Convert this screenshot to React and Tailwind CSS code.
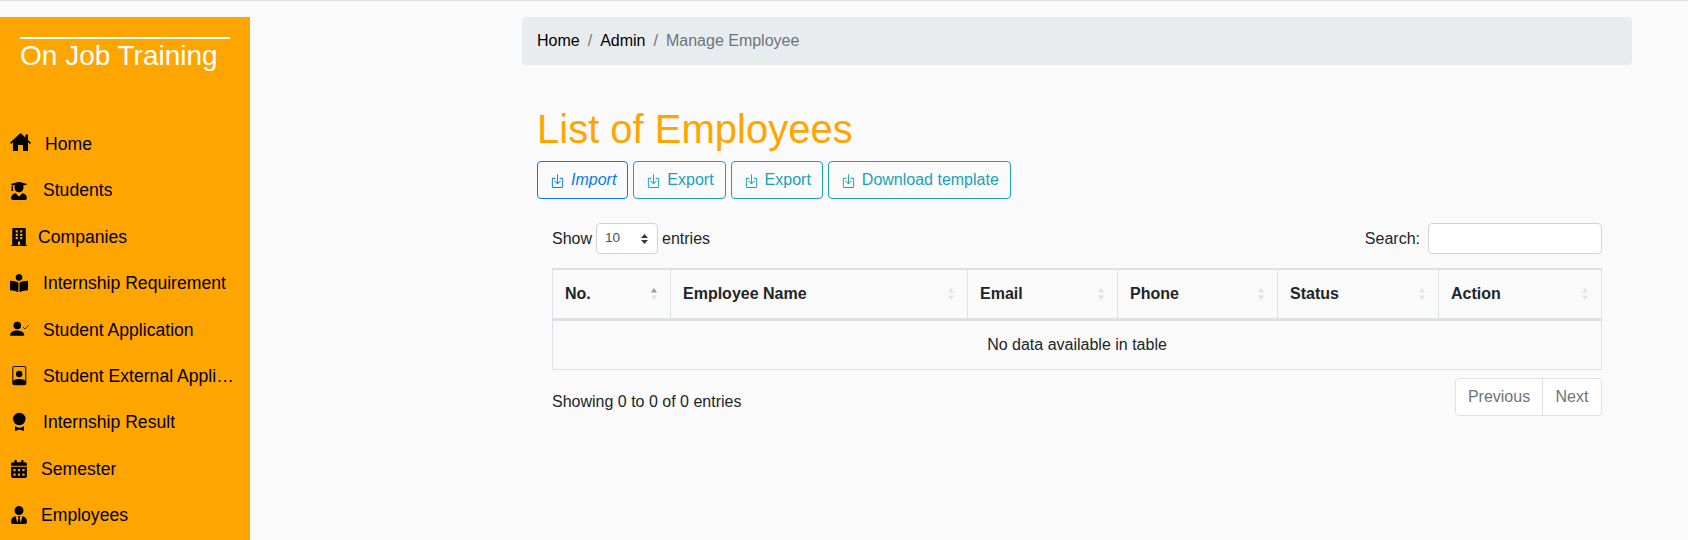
import React from 'react';
import { FaUserGraduate, FaBuilding, FaBookReader, FaCalendarAlt, FaUserTie } from 'react-icons/fa';
import { BsBoxArrowInDown } from 'react-icons/bs';

// Icons that the packages don't have in this shape, 1 unit = 1 pixel
const HomeIcon = () => (
    <svg width="22" height="22" viewBox="5 4 22 22" className="shrink-0">
        <path transform="translate(5 4)" d="M10.5 0 L15.5 4.5 V1.5 H18 V7 L21 9.7 L20 11 L18 9.2 V18 H13 V12 H8 V18 H3 V9.2 L1 11 L0 9.7 Z" fill="#000" />
    </svg>
);

const UserCheckIcon = () => (
    <svg width="22" height="22" viewBox="5 4 22 22" className="shrink-0">
        <circle cx="12.3" cy="10.5" r="3.8" fill="#000" />
        <path d="M5 20.8 C5 17 8 15.5 12 15.5 C16 15.5 19.3 17 19.3 20.8 Z" fill="#000" />
        <path d="M18 12 L20 14 L24 10" fill="none" stroke="#333" strokeWidth="1" />
    </svg>
);

const PortraitIcon = () => (
    <svg width="22" height="22" viewBox="5 4 22 22" className="shrink-0">
        <rect x="7.8" y="5.5" width="13" height="18.2" rx="1.5" fill="none" stroke="#1a1200" strokeWidth="1.1" />
        <circle cx="14.2" cy="13" r="3.2" fill="#000" />
        <path d="M8 23.8 V21 C8 19 10.5 18 14.2 18 C18 18 20.6 19 20.6 21 V23.8 Z" fill="#000" />
    </svg>
);

const AwardIcon = () => (
    <svg width="22" height="22" viewBox="5 4 22 22" className="shrink-0">
        <circle cx="14.3" cy="11" r="6.2" fill="#000" />
        <path d="M10 18.2 L14.4 20 L19 18.2 V23 L14.4 21.4 L10 23 Z" fill="#000" />
    </svg>
);

const menu = [
    { label: 'Home', custom: HomeIcon, gap: 'ml-[13px]' },
    { label: 'Students', icon: FaUserGraduate, gap: 'ml-[15px]' },
    { label: 'Companies', icon: FaBuilding, gap: 'ml-[10px]' },
    { label: 'Internship Requirement', icon: FaBookReader, gap: 'ml-[15px]' },
    { label: 'Student Application', custom: UserCheckIcon, gap: 'ml-[11px]' },
    { label: 'Student External Application', custom: PortraitIcon, gap: 'ml-[11px]' },
    { label: 'Internship Result', custom: AwardIcon, gap: 'ml-[11px]' },
    { label: 'Semester', icon: FaCalendarAlt, gap: 'ml-[13px]' },
    { label: 'Employees', icon: FaUserTie, gap: 'ml-[13px]' },
];

const columns = [
    { label: 'No.', width: 'w-[118px]', active: true },
    { label: 'Employee Name', width: 'w-[297px]' },
    { label: 'Email', width: 'w-[150px]' },
    { label: 'Phone', width: 'w-[160px]' },
    { label: 'Status', width: 'w-[161px]' },
    { label: 'Action', width: 'w-[163px]' },
];

// Small up/down arrows in the table header
const SortArrows = ({ active }) => (
    <svg width="8" height="14" viewBox="0 0 8 14" className="shrink-0">
        <path d="M4 1 L7 5.5 L1 5.5 Z" fill={active ? '#9a9a9a' : '#e2e2e2'} />
        <path d="M4 13 L7 8.5 L1 8.5 Z" fill="#e2e2e2" />
    </svg>
);

const ActionButton = ({ children, primary }) => (
    <button
        className={`h-[38px] pl-3 pr-[11px] rounded border flex items-center gap-[6px] text-base ${
            primary ? 'border-[#007bff] text-[#007bff] italic' : 'border-[#17a2b8] text-[#17a2b8]'
        }`}
    >
        <BsBoxArrowInDown className="w-[15px] h-[15px] not-italic" />
        {children}
    </button>
);

const App = () => {
    return (
        <div className="h-[540px] overflow-hidden bg-[#fafafa] border-t border-[#e2e2e2] pt-4 flex text-[#212529] font-['Liberation_Sans',Arial,sans-serif]">
            {/* Sidebar */}
            <aside className="w-[250px] h-[523px] shrink-0 bg-[#ffa500] overflow-hidden">
                <div className="mt-5 ml-5 w-[210px] border-t-2 border-white text-white text-[28px] leading-[34px]">
                    On Job Training
                </div>
                <ul className="mt-[48px] ml-[10px] text-black text-[17.6px]">
                    {menu.map((item) => (
                        <li key={item.label} className="h-[46.4px] flex items-center">
                            {item.custom ? (
                                <item.custom />
                            ) : (
                                <span className="w-[18px] shrink-0">
                                    <item.icon className="h-[18px] w-auto" />
                                </span>
                            )}
                            <span className={`${item.gap} max-w-[192px] truncate`}>{item.label}</span>
                        </li>
                    ))}
                </ul>
            </aside>

            {/* Main content */}
            <main className="ml-[272px] w-[1110px]">
                <nav className="h-12 rounded bg-[#e9ecef] px-[15px] flex items-center text-base">
                    <span className="text-black">Home</span>
                    <span className="px-2 text-[#6c757d]">/</span>
                    <span className="text-black">Admin</span>
                    <span className="px-2 text-[#6c757d]">/</span>
                    <span className="text-[#6c757d]">Manage Employee</span>
                </nav>

                <div className="ml-[15px] mt-10">
                    <h1 className="text-[40px] leading-[48px] text-[#ffa500]">List of Employees</h1>
                    <div className="mt-2 flex gap-[5px]">
                        <ActionButton primary>Import</ActionButton>
                        <ActionButton>Export</ActionButton>
                        <ActionButton>Export</ActionButton>
                        <ActionButton>Download template</ActionButton>
                    </div>
                </div>

                <div className="ml-[30px] w-[1050px]">
                    {/* Length + search */}
                    <div className="mt-6 flex justify-between items-center h-[31px]">
                        <div className="flex items-center text-base">
                            Show
                            <div className="mx-1 w-[62px] h-[31px] bg-white border border-[#ced4da] rounded px-2 flex items-center justify-between text-[13.6px] text-[#495057]">
                                10
                                <svg width="9" height="12" viewBox="0 0 9 12">
                                    <path d="M4.5 1 L8 5 L1 5 Z M4.5 11 L8 7 L1 7 Z" fill="#343a40" />
                                </svg>
                            </div>
                            entries
                        </div>
                        <div className="flex items-center text-base">
                            Search:
                            <input className="ml-2 w-[174px] h-[31px] bg-white border border-[#ced4da] rounded" />
                        </div>
                    </div>

                    {/* Table */}
                    <table className="mt-[14px] w-[1049px] table-fixed border-collapse text-base">
                        <thead>
                            <tr className="border-t-2 border-b-[3px] border-[#dee2e6]">
                                {columns.map((col) => (
                                    <th key={col.label} className={`${col.width} h-[50px] border-x border-[#dee2e6] px-3 text-left font-bold`}>
                                        <div className="flex items-center justify-between">
                                            {col.label}
                                            <SortArrows active={col.active} />
                                        </div>
                                    </th>
                                ))}
                            </tr>
                        </thead>
                        <tbody>
                            <tr className="border border-[#dee2e6]">
                                <td colSpan={6} className="h-[50px] text-center">No data available in table</td>
                            </tr>
                        </tbody>
                    </table>

                    {/* Footer */}
                    <div className="mt-2 flex justify-between items-center">
                        <div className="text-base pt-[11px]">Showing 0 to 0 of 0 entries</div>
                        <div className="flex h-[38px] bg-white border border-[#dee2e6] rounded text-base text-[#6c757d]">
                            <span className="w-[87px] flex items-center justify-center border-r border-[#dee2e6]">Previous</span>
                            <span className="w-[58px] flex items-center justify-center">Next</span>
                        </div>
                    </div>
                </div>
            </main>
        </div>
    );
};

export default App;
